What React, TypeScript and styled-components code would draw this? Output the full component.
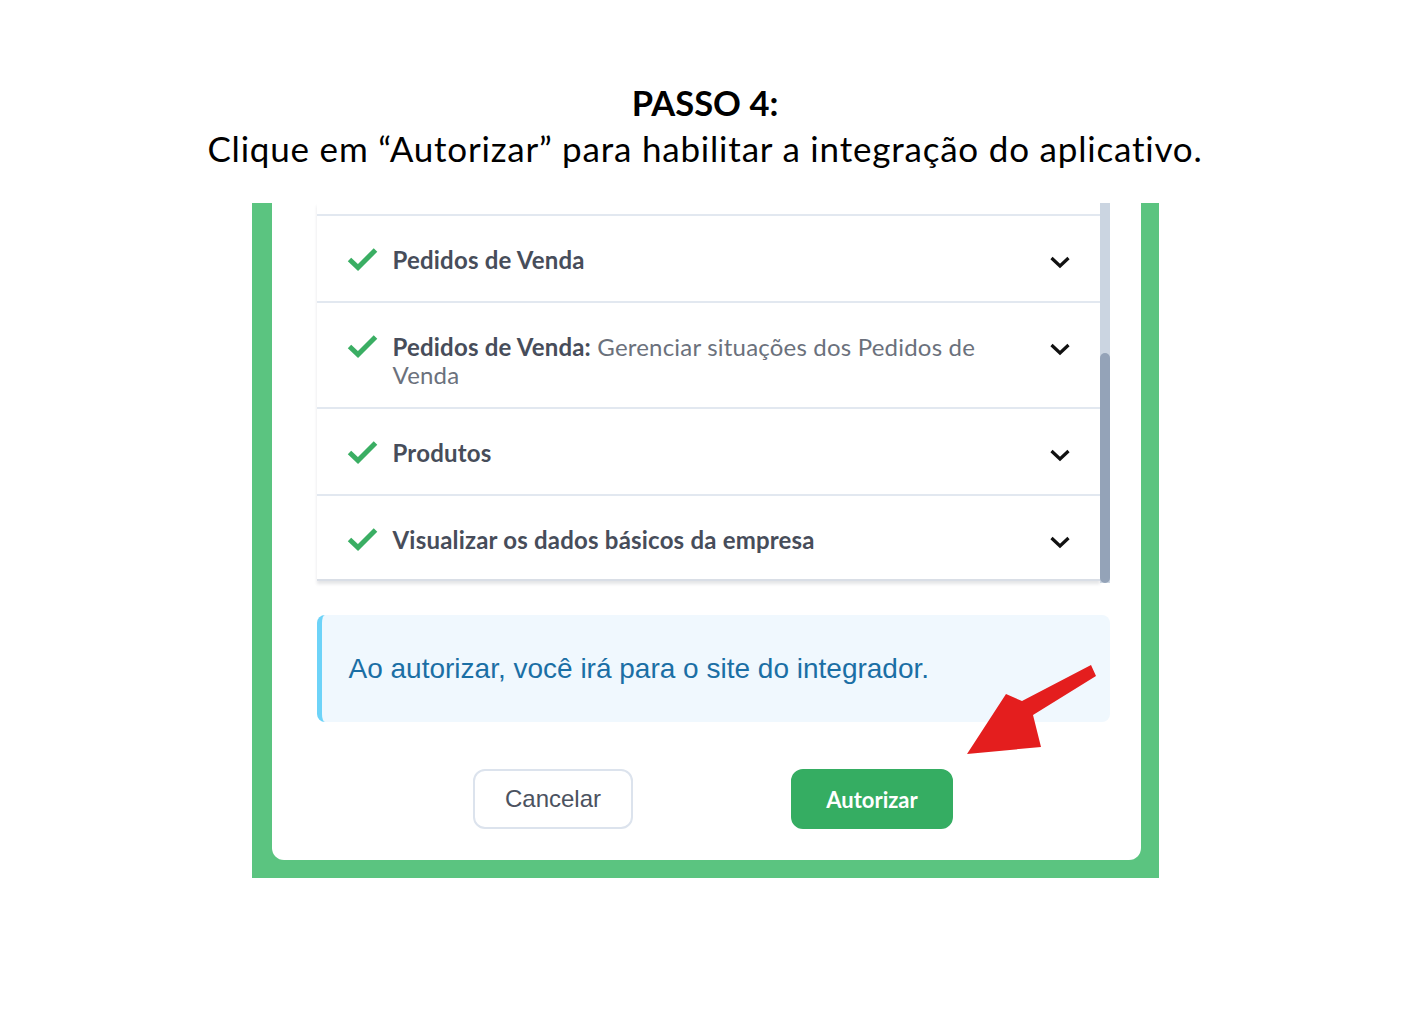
import styled, { createGlobalStyle } from 'styled-components'

const GlobalStyle = createGlobalStyle`
  body {
    margin: 0;
    background: #ffffff;
  }
`

const Page = styled.div`
  width: 1410px;
  height: 1025px;
  display: flex;
  flex-direction: column;
  align-items: center;
  font-family: Lato, "Noto Sans", sans-serif;
`

const Heading = styled.header`
  padding-top: 83px;
  height: 203px;
  box-sizing: border-box;
  text-align: center;
  color: #000;
`

const StepTitle = styled.h1`
  margin: 0;
  font-size: 34.5px;
  font-weight: 700;
  line-height: 40px;
`

const StepText = styled.p`
  margin: 4px 0 0;
  font-size: 35px;
  font-weight: 400;
  line-height: 42px;
  letter-spacing: 0.8px;
  white-space: nowrap;
`

const Frame = styled.div`
  width: 907px;
  box-sizing: border-box;
  background: #5bc480;
  padding: 0 18px 18px 20px;
`

const Card = styled.div`
  position: relative;
  background: #ffffff;
  border-radius: 0 0 12px 12px;
  padding: 0 31px 31px 45px;
`

const ListArea = styled.div`
  display: flex;
  height: 380px;
`

const List = styled.div`
  flex: 1;
  padding-top: 11px;
  align-self: flex-start;
  box-shadow: 0 3px 3px rgba(30, 41, 59, 0.12);
`

const Row = styled.div`
  display: flex;
  align-items: flex-start;
  min-height: 87px;
  box-sizing: border-box;
  padding: 30px 29px 18px 30px;
  border-top: 2px solid #e2e8f0;
  &:last-child {
    border-bottom: 2px solid #d9dee6;
  }
`

const Check = styled.svg`
  flex: none;
  width: 31px;
  height: 24px;
  margin-top: 1px;
  margin-right: 15px;
`

const RowText = styled.div`
  flex: 1;
  max-width: 592px;
  margin-right: auto;
  font-family: Lato, "Noto Sans", sans-serif;
  font-size: 24px;
  letter-spacing: 0.2px;
  line-height: 28px;
  color: #6b717c;
`

const Strong = styled.span`
  font-weight: 700;
  color: #474d5a;
`

const Chevron = styled.svg`
  flex: none;
  width: 22px;
  height: 14px;
  margin-top: 9px;
`

const Track = styled.div`
  width: 10px;
  height: 380px;
  background: #cbd5e1;
  display: flex;
  flex-direction: column;
  justify-content: flex-end;
`

const Thumb = styled.div`
  height: 230px;
  background: #94a3b8;
  border-radius: 5px;
`

const Alert = styled.div`
  margin-top: 32px;
  height: 107px;
  box-sizing: border-box;
  display: flex;
  align-items: center;
  padding-left: 27px;
  background: #f0f8fe;
  border-left: 5px solid #6dd3f8;
  border-radius: 8px;
  font-family: "Liberation Sans", Arial, sans-serif;
  font-size: 28px;
  color: #1b6fa5;
`

const Actions = styled.div`
  margin-top: 47px;
  display: flex;
  justify-content: center;
  gap: 158px;
`

const Button = styled.button<{ $primary?: boolean }>`
  width: ${p => (p.$primary ? '162px' : '160px')};
  height: 60px;
  border-radius: 12px;
  border: 2px solid ${p => (p.$primary ? '#35ad62' : '#dce3ed')};
  background: ${p => (p.$primary ? '#35ad62' : '#ffffff')};
  color: ${p => (p.$primary ? '#ffffff' : '#4b5260')};
  font-family: ${p => (p.$primary ? 'Lato, "Noto Sans", sans-serif' : '"Liberation Sans", Arial, sans-serif')};
  font-weight: ${p => (p.$primary ? 700 : 400)};
  font-size: ${p => (p.$primary ? '22px' : '24px')};
  padding: 0;
`

const Pointer = styled.svg`
  position: absolute;
  left: 695px;
  top: 462px;
  width: 140px;
  height: 90px;
`

const permissions = [
  { title: 'Pedidos de Venda' },
  { title: 'Pedidos de Venda:', desc: ' Gerenciar situações dos Pedidos de Venda' },
  { title: 'Produtos' },
  { title: 'Visualizar os dados básicos da empresa' },
]

const CheckIcon = () => (
  <Check viewBox="0 0 31 24">
    <path d="M2.5 12.5 L11 20.5 L28.5 3" fill="none" stroke="#3aae63" strokeWidth="5" />
  </Check>
)

const ChevronIcon = () => (
  <Chevron viewBox="0 0 22 14">
    <path d="M2.5 3 L11 11 L19.5 3" fill="none" stroke="#111" strokeWidth="3.2" />
  </Chevron>
)

const App = () => {
  return (
    <>
      <GlobalStyle />
      <Page>
        <Heading>
          <StepTitle>PASSO 4:</StepTitle>
          <StepText>Clique em “Autorizar” para habilitar a integração do aplicativo.</StepText>
        </Heading>
        <Frame>
          <Card>
            <ListArea>
              <List>
                {permissions.map(item => (
                  <Row key={item.title + (item.desc ?? '')}>
                    <CheckIcon />
                    <RowText>
                      <Strong>{item.title}</Strong>
                      {item.desc}
                    </RowText>
                    <ChevronIcon />
                  </Row>
                ))}
              </List>
              <Track>
                <Thumb />
              </Track>
            </ListArea>
            <Alert>Ao autorizar, você irá para o site do integrador.</Alert>
            <Actions>
              <Button>Cancelar</Button>
              <Button $primary>Autorizar</Button>
            </Actions>
            {/* red pointer arrow drawn over the card */}
            <Pointer viewBox="0 0 140 90">
              <path d="M124 0 L129 11 L66 50 L74 82 L0 89 L39 29 L55 36 Z" fill="#e41e1e" />
            </Pointer>
          </Card>
        </Frame>
      </Page>
    </>
  )
}

export default App
